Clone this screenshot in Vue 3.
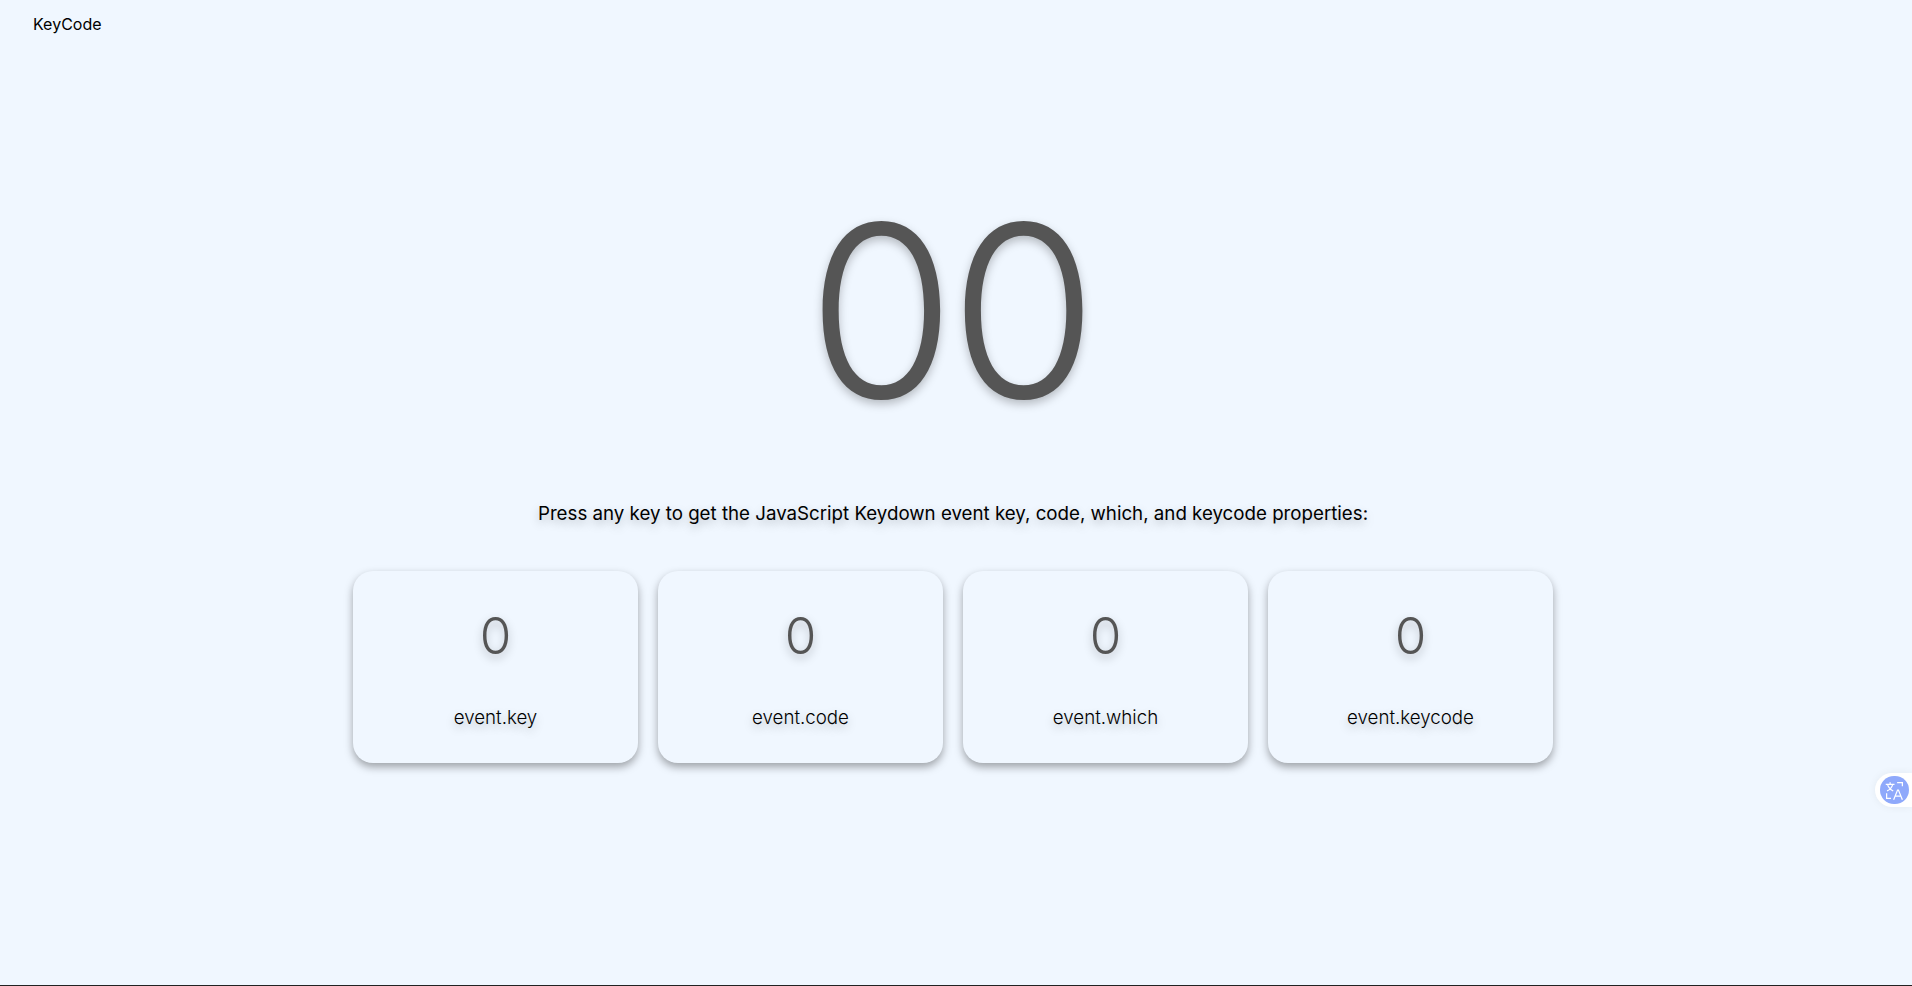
<template>
  <div class="page">
    <header class="header">KeyCode</header>

    <main class="main">
      <div class="big-code">00</div>
      <p class="hint">Press any key to get the JavaScript Keydown event key, code, which, and keycode properties:</p>

      <div class="cards">
        <div v-for="card in cards" :key="card" class="card">
          <div class="card__value">0</div>
          <div class="card__label">{{ card }}</div>
        </div>
      </div>
    </main>

    <div class="translate-btn">
      <div class="translate-btn__icon">
        <svg viewBox="0 0 24 24" fill="none" stroke="#fff" stroke-width="1.4">
          <path d="M2 5h10M7 2.5V5M3.5 12.5c3.500-1.500 5.500-4 6.500-7.500M4 5c1 3.500 3.500 6 6.500 7.500" />
          <path d="M15 3h6v4M3 15v6h5" />
          <path d="M11 22.500l4.500-11h1l4.500 11M12.600 18.500h6.800" />
        </svg>
      </div>
    </div>
  </div>
</template>

<script setup>
const cards = ['event.key', 'event.code', 'event.which', 'event.keycode']
</script>

<style>
html, body {
  margin: 0;
  background: #f0f7ff;
}
</style>

<style scoped>
.page {
  position: relative;
  box-sizing: border-box;
  height: 986px;
  overflow: hidden;
  background: #f0f7ff;
  border-bottom: 1px solid #222;
  font-family: Inter, "Noto Sans", sans-serif;
  color: #000;
}

.header {
  padding: 14px 33px 15px;
  font-size: 16px;
  line-height: 20px;
}

.main {
  width: 1906px;
  display: flex;
  flex-direction: column;
  align-items: center;
}

.big-code {
  margin-top: 117px;
  margin-right: 7px;
  font-size: 240px;
  font-weight: 300;
  line-height: 290px;
  letter-spacing: -6px;
  color: #555;
  text-shadow: 0 4px 10px rgba(0, 0, 0, 0.25);
}

.hint {
  margin: 44px 0 0;
  font-size: 18.72px;
  line-height: 28px;
  text-shadow: 0 4px 10px rgba(0, 0, 0, 0.25);
}

.cards {
  display: flex;
  gap: 20px;
  margin-top: 43px;
}

.card {
  box-sizing: border-box;
  width: 285px;
  height: 192px;
  padding-top: 33px;
  display: flex;
  flex-direction: column;
  align-items: center;
  background: #f0f7ff;
  border-radius: 20px;
  box-shadow: 0 4px 8px rgba(0, 0, 0, 0.35);
}

.card__value {
  font-size: 51.2px;
  font-weight: 300;
  line-height: 62px;
  color: #555;
  text-shadow: 0 4px 10px rgba(0, 0, 0, 0.25);
}

.card__label {
  margin-top: 38px;
  font-size: 18.72px;
  font-weight: 300;
  line-height: 28px;
  text-shadow: 0 4px 10px rgba(0, 0, 0, 0.25);
}

.translate-btn {
  position: absolute;
  right: 0;
  top: 773px;
  width: 37px;
  height: 34px;
  padding: 3px 3px 3px 5px;
  box-sizing: border-box;
  background: #fff;
  border-radius: 17px 0 0 17px;
  box-shadow: 0 0 8px rgba(0, 0, 0, 0.06);
}

.translate-btn__icon {
  width: 29px;
  height: 28px;
  border-radius: 14px;
  background: #8fa9fb;
  display: flex;
  align-items: center;
  justify-content: center;
}

.translate-btn__icon svg {
  width: 21px;
  height: 21px;
}
</style>
